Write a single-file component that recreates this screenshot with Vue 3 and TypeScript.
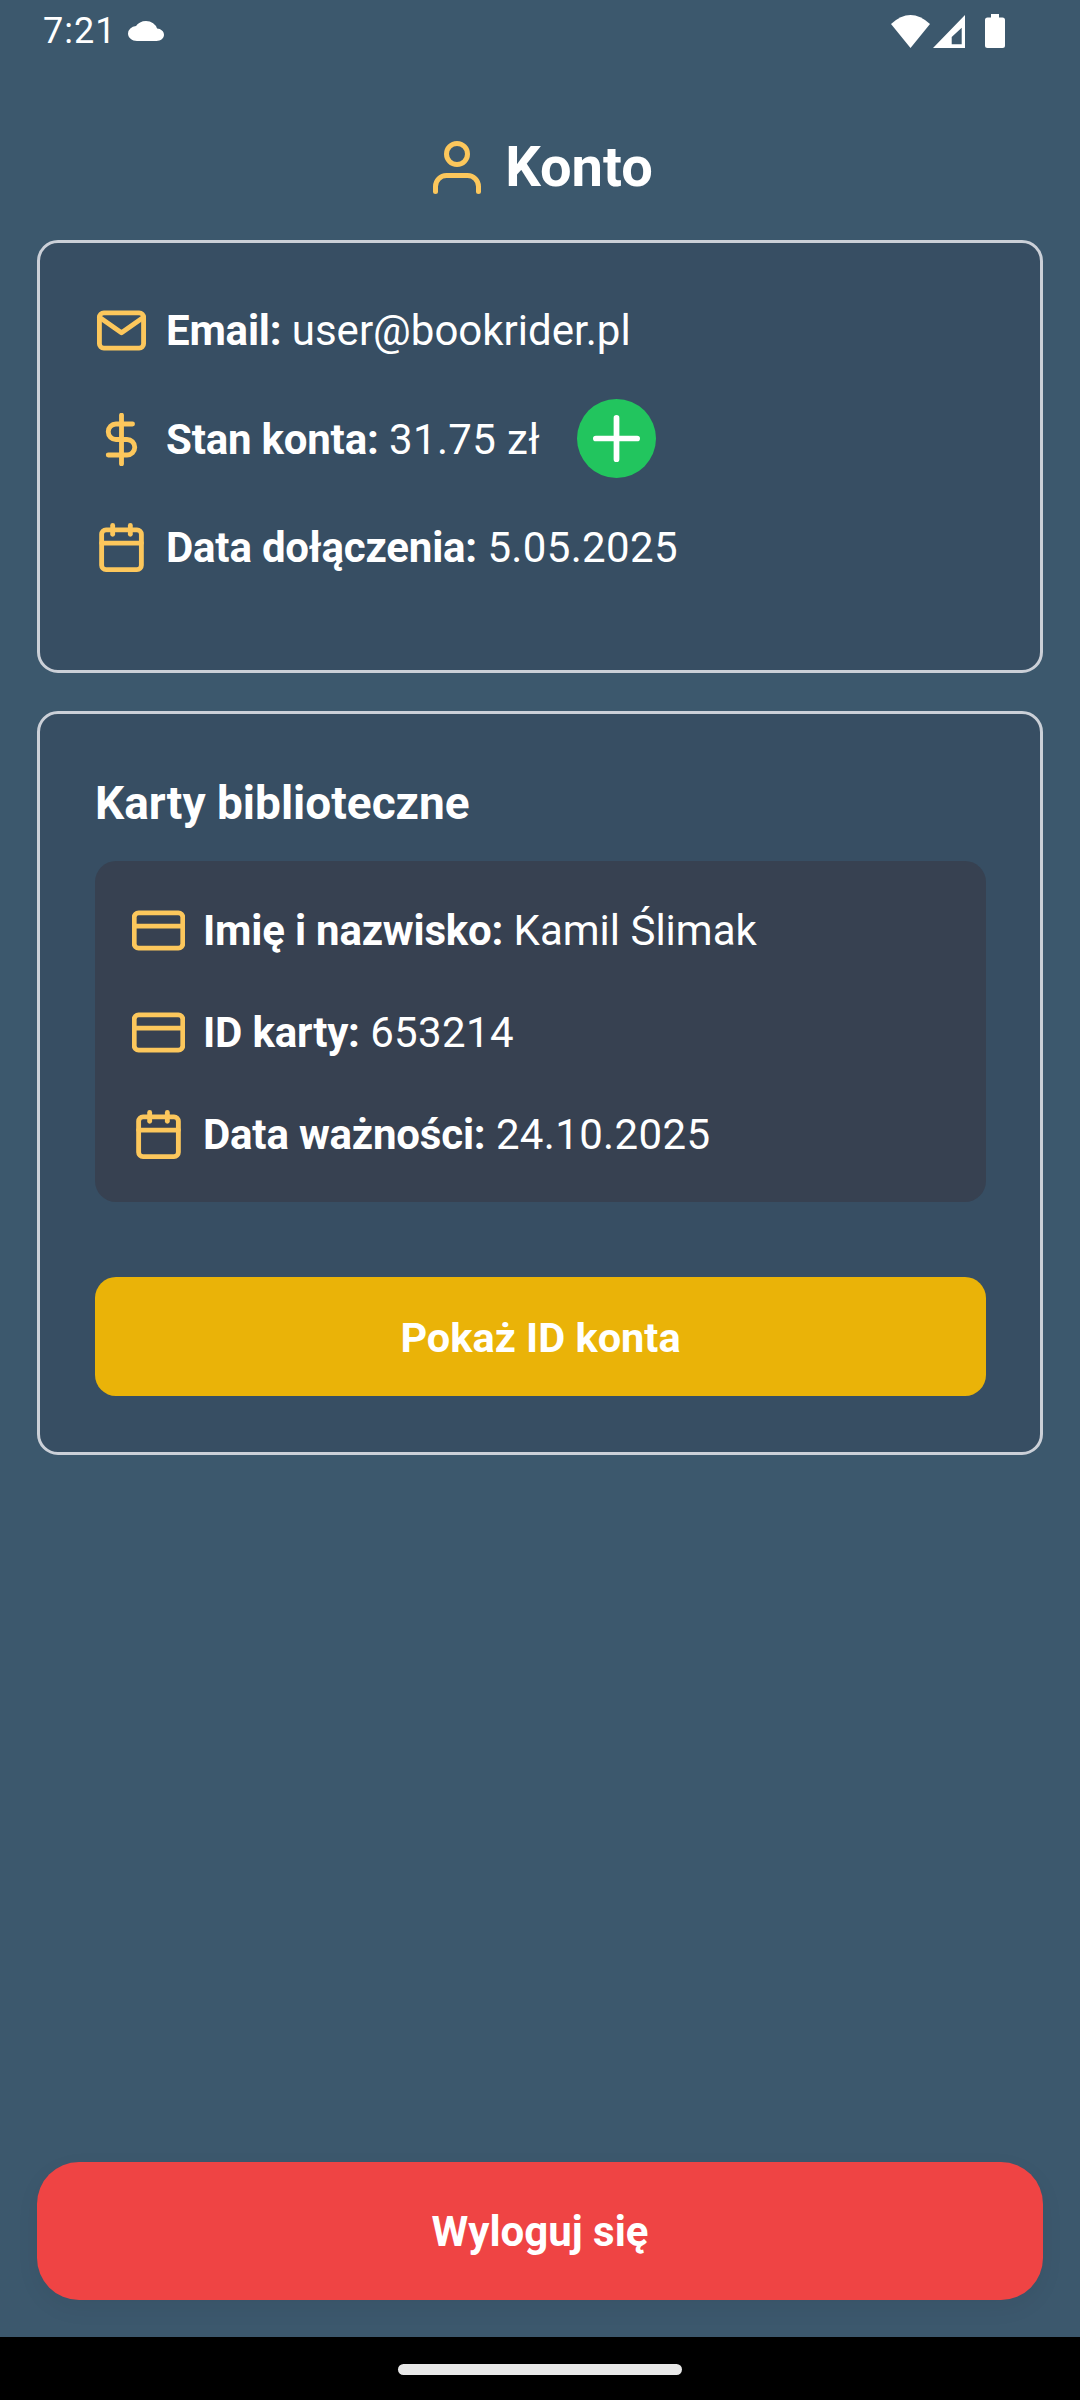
<template>
  <div class="screen">
    <div class="status-bar">
      <div class="status-left">
        <span class="clock">7:21</span>
        <svg class="cloud" viewBox="0 4 24 16" preserveAspectRatio="none"><path d="M19.35 10.04A7.49 7.49 0 0 0 12 4C9.110 4 6.600 5.640 5.350 8.040A5.994 5.994 0 0 0 0 14c0 3.310 2.690 6 6 6h13c2.760 0 5-2.240 5-5 0-2.640-2.050-4.780-4.650-4.960z" fill="#fff" /></svg>
      </div>
      <div class="status-right">
        <svg class="wifi" viewBox="0 0 39 33"><path d="M19.500 33 0 9Q19.500-9 39 9z" fill="#fff" /></svg>
        <svg class="signal" viewBox="0 0 32 33"><path d="M32 0v33H0zM18.700 22v7.300h10V12.700z" fill="#fff" fill-rule="evenodd" /></svg>
        <svg class="battery" viewBox="0 0 20 34"><path d="M6 0h8v3.500h3.500A2.500 2.500 0 0 1 20 6v25.500a2.500 2.500 0 0 1-2.500 2.500h-15A2.500 2.500 0 0 1 0 31.500V6a2.500 2.500 0 0 1 2.500-2.500H6z" fill="#fff" /></svg>
      </div>
    </div>

    <header class="page-title">
      <svg class="title-icon" viewBox="0 0 48 53"><circle cx="24" cy="13" r="10.500" /><path d="M2.500 50.500v-5a11 11 0 0 1 11-11h21a11 11 0 0 1 11 11v5" /></svg>
      <h1>Konto</h1>
    </header>

    <section class="panel account-panel">
      <div v-for="row in accountRows" :key="row.label" class="info-row">
        <span class="icon-slot">
          <svg class="row-icon" viewBox="0 0 24 24"><path v-for="d in icons[row.icon]" :key="d" :d="d" /></svg>
        </span>
        <span class="info-text"><b>{{ row.label }}:</b> <span :class="{ digits: hasDigits(row.value) }">{{ row.value }}</span></span>
        <button v-if="row.icon === 'dollar'" class="add-btn" type="button">
          <svg viewBox="0 0 24 24"><path d="M12 3v18M3 12h18" /></svg>
        </button>
      </div>
    </section>

    <section class="panel library-panel">
      <h2>Karty biblioteczne</h2>
      <div class="library-box">
        <div v-for="row in libraryRows" :key="row.label" class="library-row">
          <span class="icon-slot">
            <svg class="row-icon" viewBox="0 0 24 24"><path v-for="d in icons[row.icon]" :key="d" :d="d" /></svg>
          </span>
          <span class="info-text"><b>{{ row.label }}:</b> <span :class="{ digits: hasDigits(row.value) }">{{ row.value }}</span></span>
        </div>
      </div>
      <button class="show-id" type="button">Pokaż ID konta</button>
    </section>

    <div class="spacer"></div>

    <button class="logout" type="button">Wyloguj się</button>

    <div class="nav-bar"><span class="nav-pill"></span></div>
  </div>
</template>

<script setup lang="ts">
type IconName = 'mail' | 'dollar' | 'calendar' | 'card'

interface InfoRow {
  icon: IconName
  label: string
  value: string
}

const icons: Record<IconName, string[]> = {
  mail: [
    'M4 4h16a2 2 0 0 1 2 2v12a2 2 0 0 1-2 2H4a2 2 0 0 1-2-2V6a2 2 0 0 1 2-2z',
    'M22 6l-10 7L2 6'
  ],
  dollar: ['M12 1v22', 'M17 5H9.500a3.500 3.500 0 0 0 0 7h5a3.500 3.500 0 0 1 0 7H6'],
  calendar: [
    'M5 4h14a2 2 0 0 1 2 2v14a2 2 0 0 1-2 2H5a2 2 0 0 1-2-2V6a2 2 0 0 1 2-2z',
    'M16 2v4',
    'M8 2v4',
    'M3 10h18'
  ],
  card: ['M3 4h18a2 2 0 0 1 2 2v12a2 2 0 0 1-2 2H3a2 2 0 0 1-2-2V6a2 2 0 0 1 2-2z', 'M1 10h22']
}

const accountRows: InfoRow[] = [
  { icon: 'mail', label: 'Email', value: 'user@bookrider.pl' },
  { icon: 'dollar', label: 'Stan konta', value: '31.75 zł' },
  { icon: 'calendar', label: 'Data dołączenia', value: '5.05.2025' }
]

const libraryRows: InfoRow[] = [
  { icon: 'card', label: 'Imię i nazwisko', value: 'Kamil Ślimak' },
  { icon: 'card', label: 'ID karty', value: '653214' },
  { icon: 'calendar', label: 'Data ważności', value: '24.10.2025' }
]

// cyfry w oryginale są nieco szersze
const hasDigits = (value: string) => /^\d/.test(value)
</script>

<style>
html,
body {
  margin: 0;
  background: #3c586d;
}
</style>

<style scoped>
.screen {
  width: 1080px;
  height: 2400px;
  display: flex;
  flex-direction: column;
  background: #3c586d;
  color: #fff;
  font-family: Roboto, "Liberation Sans", sans-serif;
  overflow: hidden;
}

.status-bar {
  height: 62px;
  flex: none;
  display: flex;
  justify-content: space-between;
  align-items: center;
  padding: 0 75px 0 43px;
  box-sizing: border-box;
}

.status-left,
.status-right {
  display: flex;
  align-items: center;
}

.clock {
  font-size: 36px;
  letter-spacing: 1px;
}

.cloud {
  width: 36px;
  height: 20px;
  margin-left: 12px;
}

.wifi {
  width: 39px;
  height: 33px;
}

.signal {
  width: 32px;
  height: 33px;
  margin-left: 3px;
}

.battery {
  width: 20px;
  height: 34px;
  margin-left: 20px;
}

.page-title {
  height: 100px;
  margin-top: 55px;
  padding-left: 6px;
  flex: none;
  display: flex;
  align-items: center;
  justify-content: center;
  gap: 24px;
}

.page-title h1 {
  margin: 0;
  font-size: 56px;
  font-weight: 700;
}

.title-icon {
  width: 48px;
  height: 53px;
  fill: none;
  stroke: #fcc75c;
  stroke-width: 5;
  stroke-linecap: round;
  stroke-linejoin: round;
}

.panel {
  flex: none;
  margin: 0 37px;
  border: 3px solid #cbd0d8;
  border-radius: 21px;
  background: #374e63;
  box-sizing: border-box;
}

.account-panel {
  height: 433px;
  margin-top: 23px;
  padding: 33.500px 54px 0 55px;
}

.library-panel {
  height: 744px;
  margin-top: 38px;
  padding: 58.500px 54px 0 55px;
}

.info-row {
  height: 108.500px;
  display: flex;
  align-items: center;
}

.icon-slot {
  width: 54px;
  flex: none;
  display: flex;
  justify-content: center;
  margin: 0 18px 0 -1px;
}

.row-icon {
  width: 53px;
  height: 53px;
  flex: none;
  fill: none;
  stroke: #fcc75c;
  stroke-width: 2.200;
  stroke-linecap: round;
  stroke-linejoin: round;
}

.info-text {
  font-size: 42px;
  white-space: nowrap;
}

.info-text b {
  font-weight: 700;
  letter-spacing: -0.2px;
}

.digits {
  letter-spacing: 0.35px;
}

.add-btn {
  width: 79px;
  height: 79px;
  margin: -2px 0 0 37px;
  padding: 0;
  border: none;
  border-radius: 50%;
  background: #22c55e;
  display: flex;
  align-items: center;
  justify-content: center;
}

.add-btn svg {
  width: 55px;
  height: 55px;
  fill: none;
  stroke: #fff;
  stroke-width: 2.500;
  stroke-linecap: round;
}

.library-panel h2 {
  margin: 0;
  font-size: 46px;
  line-height: 60px;
  font-weight: 700;
}

.library-box {
  margin-top: 28.500px;
  padding: 18.500px 37px;
  height: 341px;
  box-sizing: border-box;
  border-radius: 21px;
  background: #374151;
}

.library-row {
  height: 102px;
  display: flex;
  align-items: center;
}

.show-id {
  display: block;
  width: 100%;
  height: 119px;
  margin-top: 75px;
  padding-top: 2px;
  border: none;
  border-radius: 21px;
  background: #eab308;
  color: #fff;
  font-family: inherit;
  font-size: 41.500px;
  font-weight: 700;
}

.spacer {
  flex: 1;
}

.logout {
  flex: none;
  height: 138px;
  margin: 0 37px 37px;
  border: none;
  border-radius: 42px;
  background: #ef4444;
  color: #fff;
  font-family: inherit;
  font-size: 42px;
  font-weight: 700;
  box-shadow: 0 8px 24px rgba(0, 0, 0, 0.05);
}

.nav-bar {
  height: 63px;
  flex: none;
  display: flex;
  justify-content: center;
  padding-top: 27px;
  box-sizing: border-box;
  background: #000;
}

.nav-pill {
  width: 284px;
  height: 11px;
  border-radius: 6px;
  background: #e8e8e8;
}
</style>
